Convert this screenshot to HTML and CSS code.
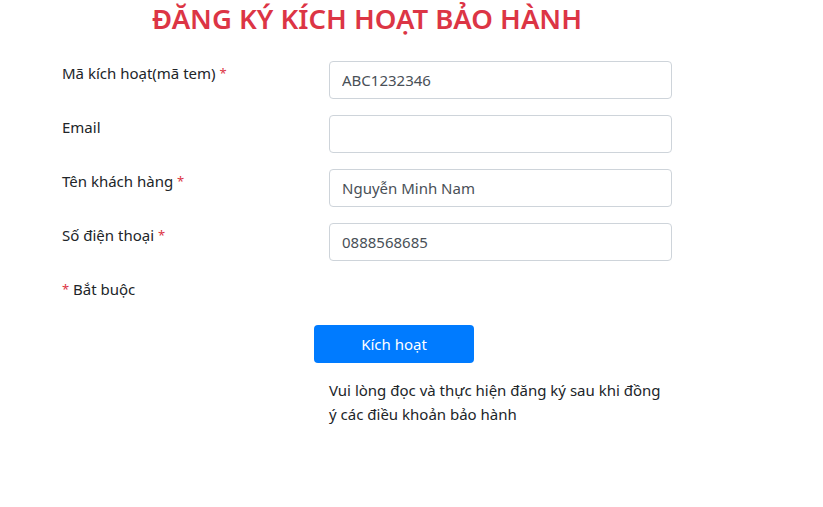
FILE: index.html
```html
<!DOCTYPE html>
<html lang="vi">
<head>
<meta charset="utf-8">
<link rel="stylesheet" href="styles.css">
</head>
<body>
<div class="wrap">
  <h3 class="title">ĐĂNG KÝ KÍCH HOẠT BẢO HÀNH</h3>
  <form class="form">
    <div class="row">
      <label class="lbl">Mã kích hoạt(mã tem) <span class="req">*</span></label>
      <div class="field"><input class="inp" type="text" value="ABC1232346"></div>
    </div>
    <div class="row">
      <label class="lbl">Email</label>
      <div class="field"><input class="inp" type="text" value=""></div>
    </div>
    <div class="row">
      <label class="lbl">Tên khách hàng <span class="req">*</span></label>
      <div class="field"><input class="inp" type="text" value="Nguyễn Minh Nam"></div>
    </div>
    <div class="row">
      <label class="lbl">Số điện thoại <span class="req">*</span></label>
      <div class="field"><input class="inp" type="text" value="0888568685"></div>
    </div>
    <div class="row">
      <div class="lbl"><span class="req">*</span> Bắt buộc</div>
    </div>
    <div class="row">
      <div class="spacer"></div>
      <div class="actions">
        <button type="button" class="btn">Kích hoạt</button>
        <p class="note">Vui lòng đọc và thực hiện đăng ký sau khi đồng ý các điều khoản bảo hành</p>
      </div>
    </div>
  </form>
</div>
</body>
</html>
```

FILE: styles.css
```css
* { box-sizing: border-box; }
body {
  margin: 0;
  background: #fff;
  font-family: "Segoe UI", "Noto Sans", "Open Sans", sans-serif;
  font-size: 15px;
  line-height: 24px;
  color: #212529;
}
.wrap {
  width: 640px;
  margin-left: 47px;
}
.title {
  margin: 0;
  padding-top: 1px;
  height: 61px;
  text-align: center;
  color: #dc3545;
  font-size: 27.5px;
  font-weight: 600;
  line-height: 36px;
}
.form { margin: 0; }
.row {
  display: flex;
  margin-bottom: 16px;
}
.lbl, .spacer {
  width: 267px;
  padding: 0 15px;
  flex: none;
}
.req {
  color: #dc3545;
  font-size: 13px;
  vertical-align: 1px;
}
.field {
  width: 373px;
  padding: 0 15px;
}
.inp {
  display: block;
  width: 100%;
  height: 38px;
  margin: 0;
  padding: 6px 12px;
  border: 1px solid #ced4da;
  border-radius: 4px;
  font-family: inherit;
  font-size: 15px;
  color: #495057;
  background: #fff;
}
.row:nth-child(5) { margin-bottom: 24px; }
.actions {
  width: 373px;
}
.btn {
  display: block;
  width: 160px;
  height: 38px;
  margin: 0;
  border: 0;
  border-radius: 4px;
  background: #007bff;
  color: #fff;
  font-family: inherit;
  font-size: 15px;
}
.note {
  margin: 15px 0 0;
  padding: 0 15px;
}
```
